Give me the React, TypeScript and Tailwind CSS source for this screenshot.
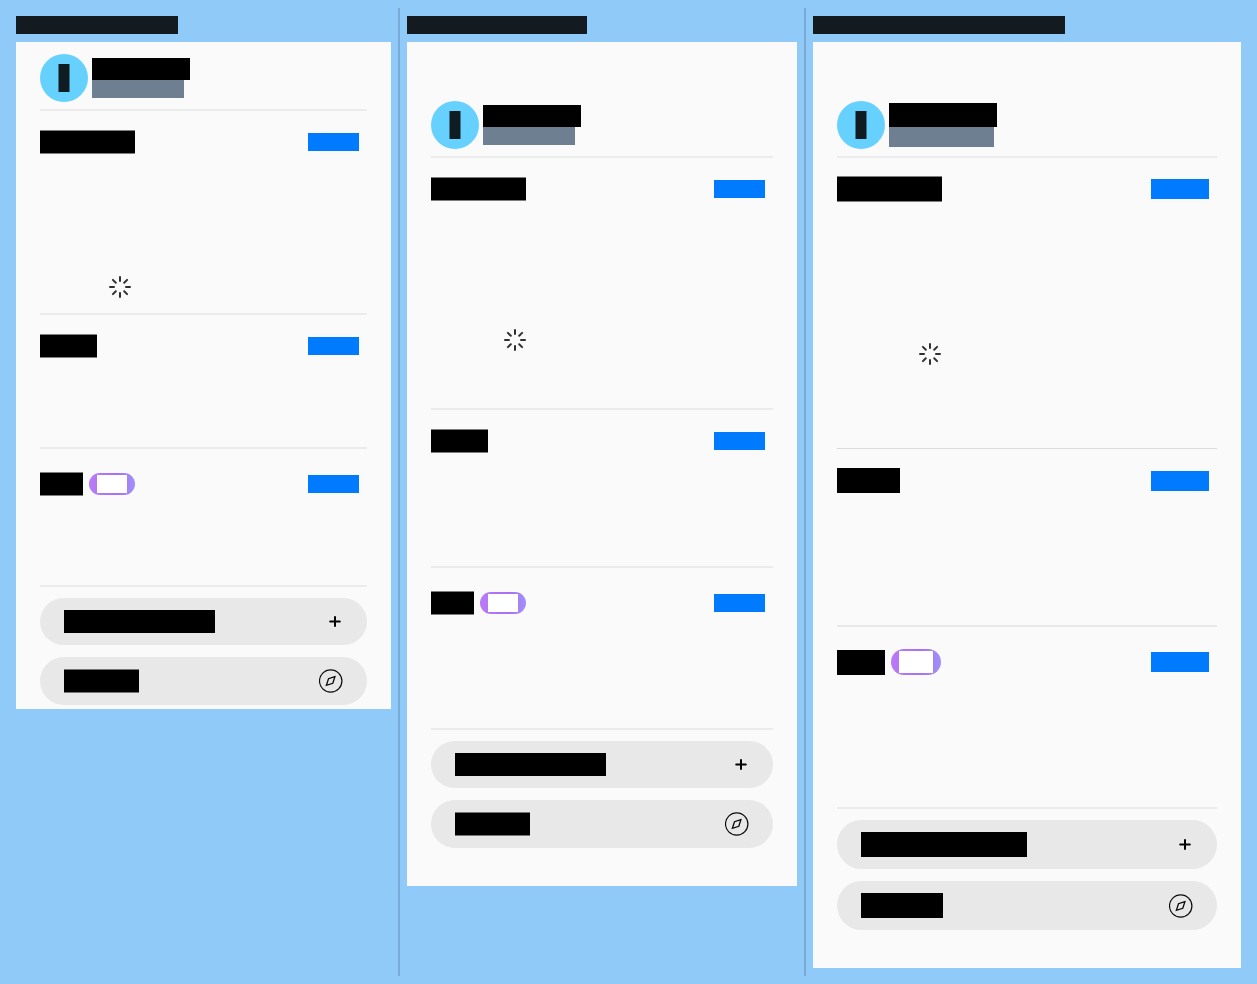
import React from "react";
import clsx from "clsx";

type Size = "md" | "lg";

interface Section {
  name: string;
  row: string;
  title: string;
  badge?: boolean;
  spinner?: string;
}

interface Device {
  label: string;
  labelWidth: string;
  size: Size;
  panel: string;
  sections: Section[];
}

const softEdge = "border-y border-[#7d7d7d]";

const devices: Device[] = [
  {
    label: "Small device",
    labelWidth: "w-[162px]",
    size: "md",
    panel: "pt-3 pb-1",
    sections: [
      {
        name: "First section",
        row: "min-h-[204px] pt-[19px] border-b-2 border-[#ebebeb]",
        title: "h-6 w-[95px] " + softEdge,
        spinner: "mt-[122px] w-40",
      },
      {
        name: "Second section",
        row: "min-h-[134px] pt-[19px] border-b-2 border-[#ebebeb]",
        title: "h-6 w-[57px] " + softEdge,
      },
      {
        name: "Third section",
        row: "min-h-[138px] pt-[23px] border-b-2 border-[#ebebeb]",
        title: "h-6 w-[43px] " + softEdge,
        badge: true,
      },
    ],
  },
  {
    label: "Medium device",
    labelWidth: "w-[180px]",
    size: "md",
    panel: "pt-[59px] pb-[38px]",
    sections: [
      {
        name: "First section",
        row: "min-h-[252px] pt-[19px] border-b-2 border-[#ebebeb]",
        title: "h-6 w-[95px] " + softEdge,
        spinner: "mt-32 w-[168px]",
      },
      {
        name: "Second section",
        row: "min-h-[158px] pt-[19px] border-b-2 border-[#ebebeb]",
        title: "h-6 w-[57px] " + softEdge,
      },
      {
        name: "Third section",
        row: "min-h-[162px] pt-[23px] border-b-2 border-[#ebebeb]",
        title: "h-6 w-[43px] " + softEdge,
        badge: true,
      },
    ],
  },
  {
    label: "Large device",
    labelWidth: "w-[252px]",
    size: "lg",
    panel: "pt-[59px] pb-[38px]",
    sections: [
      {
        name: "First section",
        row: "min-h-[291px] pt-[18px] border-b border-[#dbdbdb]",
        title: "h-[26px] w-[105px] " + softEdge,
        spinner: "mt-[141px] w-[186px]",
      },
      {
        name: "Second section",
        row: "min-h-[178px] pt-[19px] border-b-2 border-[#e8e8e8]",
        title: "h-[25px] w-[63px]",
      },
      {
        name: "Third section",
        row: "min-h-[182px] pt-[22px] border-b-2 border-[#ebebeb]",
        title: "h-[25px] w-12",
        badge: true,
      },
    ],
  },
];

function Spinner() {
  return (
    <svg
      viewBox="0 0 22 22"
      className="size-[22px] text-[#303030]"
      fill="none"
      stroke="currentColor"
      strokeWidth="2"
      strokeLinecap="round"
      role="status"
      aria-label="Loading"
    >
      <path d="M11 1v4M11 17v4M1 11h4M17 11h4M3.9 3.9l2.9 2.9M15.2 15.2l2.9 2.9M3.9 18.1l2.9-2.9M15.2 6.8l2.9-2.9" />
    </svg>
  );
}

function PlusIcon() {
  return (
    <svg viewBox="0 0 16 16" className="size-4" fill="none" stroke="#000" strokeWidth="2" strokeLinecap="round" aria-hidden="true">
      <path d="M8 3v9M3.2 7.5h9.6" />
    </svg>
  );
}

function CompassIcon() {
  return (
    <svg viewBox="0 0 24 24" className="size-6" fill="none" stroke="#0a0a0a" strokeWidth="1.2" strokeLinejoin="miter" aria-hidden="true">
      <circle cx="11.7" cy="12" r="11.2" />
      <path strokeWidth="1.3" d="M15.9 7.7L9.5 9.7L7.4 16.3L13.8 14.3Z" />
    </svg>
  );
}

function Profile({ size }: { size: Size }) {
  return (
    <header className="flex items-center gap-1 border-b-2 border-[#ebebeb] pb-[7px]">
      <div className="flex size-12 shrink-0 items-center justify-center rounded-full bg-[#66d1ff]">
        <span className="h-7 w-3 border-x border-[#3a7690] bg-[#0f1c21]" />
      </div>
      <div>
        <div className={clsx("bg-black", size === "lg" ? "h-6 w-[108px]" : "h-[22px] w-[98px]")} />
        <div className={clsx("bg-[#6d7f90]", size === "lg" ? "h-5 w-[105px]" : "h-[18px] w-[92px]")} />
      </div>
    </header>
  );
}

function Badge({ size }: { size: Size }) {
  return (
    <span
      className={clsx(
        "flex items-center justify-center rounded-full bg-linear-to-r from-[#ba7af6] via-[#aa70f2] via-60% to-[#a090f8] px-2",
        size === "lg" ? "h-[26px] w-[50px]" : "h-[22px] w-[46px]",
      )}
    >
      <span className={clsx("w-full bg-white", size === "lg" ? "h-[22px]" : "h-[18px]")} />
    </span>
  );
}

function SectionBlock({ section, size }: { section: Section; size: Size }) {
  return (
    <section className={section.row}>
      <div className="flex items-center justify-between pr-2">
        <div className="flex items-center gap-1.5">
          <h2 aria-label={section.name} className={clsx("bg-black", section.title)} />
          {section.badge && <Badge size={size} />}
        </div>
        <button
          type="button"
          aria-label={"See all of " + section.name}
          className={clsx("bg-[#007aff]", size === "lg" ? "h-5 w-[58px]" : "h-[18px] w-[51px]")}
        />
      </div>
      {section.spinner && (
        <div className={clsx("flex justify-center", section.spinner)}>
          <Spinner />
        </div>
      )}
    </section>
  );
}

function ActionButton({ name, bar, children }: { name: string; bar: string; children: React.ReactNode }) {
  return (
    <button
      type="button"
      aria-label={name}
      className="flex w-full items-center justify-between rounded-full bg-[#e8e8e8] px-6 py-3"
    >
      <span className={clsx("bg-black", bar)} />
      {children}
    </button>
  );
}

function DeviceColumn({ device }: { device: Device }) {
  const large = device.size === "lg";
  return (
    <div className="flex min-w-0 flex-col gap-2 py-2">
      <h1 aria-label={device.label} className={clsx("h-[18px] bg-[#131b21]", device.labelWidth)} />
      <article className={clsx("bg-[#fafafa] px-6", device.panel)}>
        <Profile size={device.size} />
        {device.sections.map((section) => (
          <SectionBlock key={section.name} section={section} size={device.size} />
        ))}
        <div className="flex flex-col gap-3 pt-[11px]">
          <ActionButton name="Add" bar={large ? "h-[25px] w-[166px]" : "h-[23px] w-[151px]"}>
            <PlusIcon />
          </ActionButton>
          <ActionButton
            name="Explore"
            bar={large ? "h-[25px] w-[82px]" : "h-6 w-[75px] border-y border-[#747474]"}
          >
            <CompassIcon />
          </ActionButton>
        </div>
      </article>
    </div>
  );
}

export default function App() {
  return (
    <main className="grid min-h-screen grid-cols-[375fr_2px_390fr_2px_428fr] gap-x-[7px] bg-[#90caf9] px-4 py-2 font-['Roboto',sans-serif]">
      {devices.map((device, index) => (
        <React.Fragment key={device.label}>
          {index > 0 && <div className="bg-[#79abd6]" />}
          <DeviceColumn device={device} />
        </React.Fragment>
      ))}
    </main>
  );
}
